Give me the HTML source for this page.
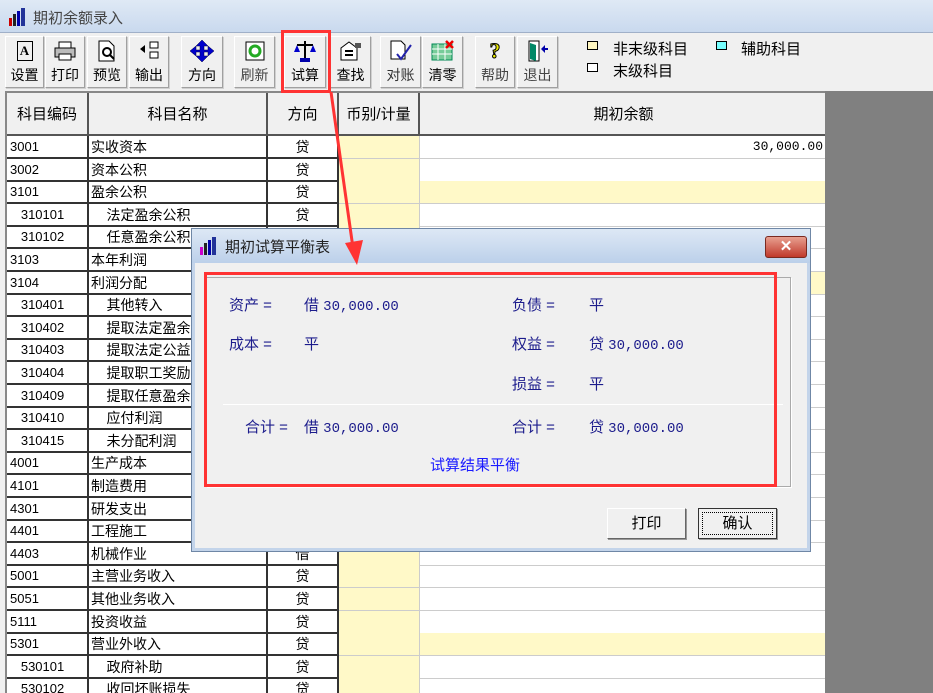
<!DOCTYPE html>
<html><head><meta charset="utf-8">
<style>
*{margin:0;padding:0;box-sizing:border-box}
body{width:933px;height:693px;overflow:hidden;background:#f0f0f0;position:relative;font-family:"Liberation Sans","Noto Sans CJK SC",sans-serif;font-size:14px;color:#000}
.abs{position:absolute}
.title{left:0;top:0;width:933px;height:33px;background:linear-gradient(#dfe9f5,#c9d9ee);border-bottom:1px solid #a0b0c8}
.title span{position:absolute;left:33px;top:7px;font-size:15px;color:#444}
.btn{position:absolute;top:36px;height:52px;background:#f0f0f0;border:1px solid;border-color:#fff #a0a0a0 #a0a0a0 #fff;box-shadow:1px 1px 0 #d0d0d0;text-align:center;font-size:14px}
.btn .ic{height:28px;display:flex;align-items:center;justify-content:center}
.btn .tx{line-height:20px}
.grid{left:5px;top:91px;width:820px;height:602px;background:#fff;border-left:2px solid #888;border-top:2px solid #888;overflow:hidden}
.dark{left:825px;top:91px;width:108px;height:602px;background:#808080}
.hd{position:absolute;top:0;height:43px;background:#f0f0f0;border-right:2px solid #555;border-bottom:2px solid #555;display:flex;align-items:center;justify-content:center;font-size:15px}
.row{position:absolute;left:0;height:23px;width:820px}
.c{position:absolute;top:0;height:23px;line-height:22px;font-size:14px;white-space:nowrap;overflow:hidden}
.c1{left:0;width:82px;border-right:2px solid #333;border-bottom:2px solid #333;font-size:13px;padding-left:3px}
.c2{left:82px;width:179px;border-right:2px solid #333;border-bottom:2px solid #333;padding-left:2px}
.c3{left:261px;width:71px;border-right:2px solid #333;border-bottom:2px solid #333;text-align:center}
.c4{left:332px;width:81px;background:#fff9c8;border-right:1px solid #ccc;border-bottom:1px solid #ccc}
.c5{left:413px;width:407px;border-bottom:1px solid #ccc;text-align:right;padding-right:4px;font-family:"Liberation Mono","Noto Sans CJK SC",monospace;font-size:13px}
.y{background:#fff9c8}
.dlg{left:191px;top:228px;width:620px;height:324px;background:#f0f0f0;border:1px solid #6f87a6;box-shadow:0 0 0 3px #c3d4ea inset}
.dt{position:absolute;left:0;top:0;width:618px;height:34px;background:linear-gradient(#dde8f5,#bcd0ea)}
.blue{color:#1c1c8c;font-size:15px;position:absolute}
.mono{font-family:"Liberation Mono",monospace;font-size:14px}
.pb{position:absolute;top:279px;width:79px;height:31px;background:#f0f0f0;border:1px solid;border-color:#fff #666 #666 #fff;box-shadow:1px 1px 0 #999;text-align:center;line-height:29px;font-size:15px}
</style></head><body>
<div class="abs title"><svg class="abs" style="left:8px;top:8px" width="20" height="18"><rect x="1" y="10" width="3" height="8" fill="#c00"/><rect x="5" y="6" width="3" height="12" fill="#222"/><rect x="9" y="3" width="3" height="15" fill="#00a"/><rect x="13" y="0" width="4" height="18" fill="#239"/></svg><span>期初余额录入</span></div>

<div class="btn" style="left:5px;width:39px"><div class="ic"><div style="width:16px;height:20px;border:1px solid #000;font:bold 13px 'Liberation Serif';line-height:18px">A</div></div><div class="tx">设置</div></div>
<div class="btn" style="left:45px;width:40px"><div class="ic"><svg width="22" height="20"><rect x="5" y="1" width="12" height="6" fill="#fff" stroke="#000"/><rect x="1" y="7" width="20" height="9" fill="#bbb" stroke="#000"/><rect x="5" y="13" width="12" height="6" fill="#fff" stroke="#000"/></svg></div><div class="tx">打印</div></div>
<div class="btn" style="left:87px;width:40px"><div class="ic"><svg width="20" height="22"><path d="M2 1h10l5 5v15H2z" fill="#fff" stroke="#000"/><circle cx="10" cy="12" r="4" fill="none" stroke="#000" stroke-width="2"/><path d="M13 15l4 4" stroke="#000" stroke-width="2"/></svg></div><div class="tx">预览</div></div>
<div class="btn" style="left:129px;width:40px"><div class="ic"><svg width="22" height="20"><path d="M2 8l5-4v8z" fill="#000"/><rect x="12" y="1" width="8" height="6" fill="#fff" stroke="#000"/><rect x="12" y="11" width="8" height="6" fill="#fff" stroke="#000"/></svg></div><div class="tx">输出</div></div>
<div class="btn" style="left:181px;width:42px"><div class="ic"><svg width="24" height="24"><path d="M12 1l6 6h-4v4h4V7l6 5-6 5v-4h-4v4h4l-6 6-6-6h4v-4H6v4l-6-5 6-5v4h4V7H6z" fill="#00c" stroke="#004" stroke-width=".5"/></svg></div><div class="tx">方向</div></div>
<div class="btn" style="left:234px;width:41px"><div class="ic"><svg width="20" height="20"><rect x="1" y="1" width="18" height="18" fill="#fff" stroke="#000"/><circle cx="10" cy="10" r="5" fill="none" stroke="#2a2" stroke-width="3"/></svg></div><div class="tx" style="color:#444">刷新</div></div>
<div class="btn" style="left:284px;width:42px"><div class="ic"><svg width="24" height="24"><path d="M12 2v18M4 6h16M8 21h8" stroke="#000" stroke-width="2"/><path d="M1 13l3-7 3 7zM17 13l3-7 3 7z" fill="#00c"/><rect x="7" y="19" width="10" height="4" fill="#00a"/></svg></div><div class="tx">试算</div></div>
<div class="btn" style="left:330px;width:41px"><div class="ic"><svg width="24" height="22"><path d="M2 8l8-6 8 6v12H2z" fill="#fff" stroke="#000"/><rect x="6" y="10" width="8" height="2" fill="#000"/><rect x="6" y="14" width="8" height="2" fill="#000"/><path d="M16 3h6v5h-6z" fill="#555"/></svg></div><div class="tx">查找</div></div>
<div class="btn" style="left:380px;width:41px"><div class="ic"><svg width="24" height="22"><path d="M2 1h10l4 4v14H2z" fill="#fff" stroke="#000"/><path d="M8 14l4 5 10-14" fill="none" stroke="#22a" stroke-width="2"/></svg></div><div class="tx" style="color:#333">对账</div></div>
<div class="btn" style="left:422px;width:41px"><div class="ic"><svg width="24" height="22"><rect x="1" y="4" width="20" height="16" fill="#7c9" stroke="#085"/><path d="M1 9h20M1 14h20M7 4v16M14 4v16" stroke="#fff"/><path d="M15 1l7 7M22 1l-7 7" stroke="#e00" stroke-width="2.5"/></svg></div><div class="tx">清零</div></div>
<div class="btn" style="left:475px;width:40px"><div class="ic"><span style="font:bold 22px 'Liberation Serif';color:#ee0;-webkit-text-stroke:1px #000">?</span></div><div class="tx" style="color:#444">帮助</div></div>
<div class="btn" style="left:517px;width:41px"><div class="ic"><svg width="22" height="22"><rect x="2" y="1" width="10" height="20" fill="#fff" stroke="#000"/><path d="M3 3l6 2v16l-6-2z" fill="#086"/><path d="M14 9l4-4v3h3v2h-3v3z" fill="#00a"/></svg></div><div class="tx" style="color:#444">退出</div></div>

<div class="abs" style="left:587px;top:41px;width:11px;height:9px;background:#fff6c0;border:1px solid #000"></div>
<div class="abs" style="left:613px;top:38px;font-size:15px">非末级科目</div>
<div class="abs" style="left:716px;top:41px;width:11px;height:9px;background:#7ff;border:1px solid #000"></div>
<div class="abs" style="left:741px;top:38px;font-size:15px">辅助科目</div>
<div class="abs" style="left:587px;top:63px;width:11px;height:9px;background:#fff;border:1px solid #000"></div>
<div class="abs" style="left:613px;top:60px;font-size:15px">末级科目</div>

<div class="abs dark"></div>
<div class="abs grid">
<div class="hd" style="left:0;width:82px">科目编码</div>
<div class="hd" style="left:82px;width:179px">科目名称</div>
<div class="hd" style="left:261px;width:71px">方向</div>
<div class="hd" style="left:332px;width:81px">币别/计量</div>
<div class="hd" style="left:413px;width:407px;border-right:none">期初余额</div>
<div style="position:absolute;left:0;top:43px">
<div class="row" style="top:0"><div class="c c1">3001</div><div class="c c2">实收资本</div><div class="c c3">贷</div><div class="c c4"></div><div class="c c5">30,000.00</div></div>
<div class="row" style="top:22.6px"><div class="c c1">3002</div><div class="c c2">资本公积</div><div class="c c3">贷</div><div class="c c4"></div><div class="c c5"></div></div>
<div class="row" style="top:45.2px"><div class="c c1">3101</div><div class="c c2">盈余公积</div><div class="c c3">贷</div><div class="c c4"></div><div class="c c5 y"></div></div>
<div class="row" style="top:67.8px"><div class="c c1">&nbsp;&nbsp;&nbsp;310101</div><div class="c c2">&nbsp;&nbsp;&nbsp;&nbsp;法定盈余公积</div><div class="c c3">贷</div><div class="c c4"></div><div class="c c5"></div></div>
<div class="row" style="top:90.4px"><div class="c c1">&nbsp;&nbsp;&nbsp;310102</div><div class="c c2">&nbsp;&nbsp;&nbsp;&nbsp;任意盈余公积</div><div class="c c3">贷</div><div class="c c4"></div><div class="c c5"></div></div>
<div class="row" style="top:113px"><div class="c c1">3103</div><div class="c c2">本年利润</div><div class="c c3">贷</div><div class="c c4"></div><div class="c c5"></div></div>
<div class="row" style="top:135.6px"><div class="c c1">3104</div><div class="c c2">利润分配</div><div class="c c3">贷</div><div class="c c4"></div><div class="c c5 y"></div></div>
<div class="row" style="top:158.2px"><div class="c c1">&nbsp;&nbsp;&nbsp;310401</div><div class="c c2">&nbsp;&nbsp;&nbsp;&nbsp;其他转入</div><div class="c c3">贷</div><div class="c c4"></div><div class="c c5"></div></div>
<div class="row" style="top:180.8px"><div class="c c1">&nbsp;&nbsp;&nbsp;310402</div><div class="c c2">&nbsp;&nbsp;&nbsp;&nbsp;提取法定盈余公积</div><div class="c c3">贷</div><div class="c c4"></div><div class="c c5"></div></div>
<div class="row" style="top:203.4px"><div class="c c1">&nbsp;&nbsp;&nbsp;310403</div><div class="c c2">&nbsp;&nbsp;&nbsp;&nbsp;提取法定公益金</div><div class="c c3">贷</div><div class="c c4"></div><div class="c c5"></div></div>
<div class="row" style="top:226px"><div class="c c1">&nbsp;&nbsp;&nbsp;310404</div><div class="c c2">&nbsp;&nbsp;&nbsp;&nbsp;提取职工奖励</div><div class="c c3">贷</div><div class="c c4"></div><div class="c c5"></div></div>
<div class="row" style="top:248.6px"><div class="c c1">&nbsp;&nbsp;&nbsp;310409</div><div class="c c2">&nbsp;&nbsp;&nbsp;&nbsp;提取任意盈余</div><div class="c c3">贷</div><div class="c c4"></div><div class="c c5"></div></div>
<div class="row" style="top:271.2px"><div class="c c1">&nbsp;&nbsp;&nbsp;310410</div><div class="c c2">&nbsp;&nbsp;&nbsp;&nbsp;应付利润</div><div class="c c3">贷</div><div class="c c4"></div><div class="c c5"></div></div>
<div class="row" style="top:293.8px"><div class="c c1">&nbsp;&nbsp;&nbsp;310415</div><div class="c c2">&nbsp;&nbsp;&nbsp;&nbsp;未分配利润</div><div class="c c3">贷</div><div class="c c4"></div><div class="c c5"></div></div>
<div class="row" style="top:316.4px"><div class="c c1">4001</div><div class="c c2">生产成本</div><div class="c c3">借</div><div class="c c4"></div><div class="c c5"></div></div>
<div class="row" style="top:339px"><div class="c c1">4101</div><div class="c c2">制造费用</div><div class="c c3">借</div><div class="c c4"></div><div class="c c5"></div></div>
<div class="row" style="top:361.6px"><div class="c c1">4301</div><div class="c c2">研发支出</div><div class="c c3">借</div><div class="c c4"></div><div class="c c5"></div></div>
<div class="row" style="top:384.2px"><div class="c c1">4401</div><div class="c c2">工程施工</div><div class="c c3">借</div><div class="c c4"></div><div class="c c5"></div></div>
<div class="row" style="top:406.8px"><div class="c c1">4403</div><div class="c c2">机械作业</div><div class="c c3">借</div><div class="c c4"></div><div class="c c5"></div></div>
<div class="row" style="top:429.4px"><div class="c c1">5001</div><div class="c c2">主营业务收入</div><div class="c c3">贷</div><div class="c c4"></div><div class="c c5"></div></div>
<div class="row" style="top:452px"><div class="c c1">5051</div><div class="c c2">其他业务收入</div><div class="c c3">贷</div><div class="c c4"></div><div class="c c5"></div></div>
<div class="row" style="top:474.6px"><div class="c c1">5111</div><div class="c c2">投资收益</div><div class="c c3">贷</div><div class="c c4"></div><div class="c c5"></div></div>
<div class="row" style="top:497.2px"><div class="c c1">5301</div><div class="c c2">营业外收入</div><div class="c c3">贷</div><div class="c c4"></div><div class="c c5 y"></div></div>
<div class="row" style="top:519.8px"><div class="c c1">&nbsp;&nbsp;&nbsp;530101</div><div class="c c2">&nbsp;&nbsp;&nbsp;&nbsp;政府补助</div><div class="c c3">贷</div><div class="c c4"></div><div class="c c5"></div></div>
<div class="row" style="top:542.4px"><div class="c c1">&nbsp;&nbsp;&nbsp;530102</div><div class="c c2">&nbsp;&nbsp;&nbsp;&nbsp;收回坏账损失</div><div class="c c3">贷</div><div class="c c4"></div><div class="c c5"></div></div>
</div>
</div>

<!-- red highlight on 试算 -->
<div class="abs" style="left:281px;top:30px;width:50px;height:63px;border:3px solid #f33"></div>

<div class="abs dlg">
<div class="dt"><svg class="abs" style="left:7px;top:8px" width="20" height="18"><rect x="1" y="10" width="3" height="8" fill="#c0c"/><rect x="5" y="6" width="3" height="12" fill="#222"/><rect x="9" y="3" width="3" height="15" fill="#00a"/><rect x="13" y="0" width="4" height="18" fill="#239"/></svg><span class="abs" style="left:33px;top:7px;font-size:15px;color:#222">期初试算平衡表</span>
<div class="abs" style="left:573px;top:7px;width:42px;height:22px;border-radius:3px;background:linear-gradient(#e8a090,#c0392b);border:1px solid #7a2a20;color:#fff;font:bold 15px 'Liberation Sans';text-align:center;line-height:20px">✕</div></div>
<div class="abs" style="left:14px;top:48px;width:585px;height:210px;border:1px solid #aaa;box-shadow:1px 1px 0 #fff"></div>
<div class="abs" style="left:31px;top:175px;width:560px;height:1px;background:#888;border-bottom:1px solid #fff"></div>
<div class="blue" style="left:37px;top:65px">资产 =</div>
<div class="blue" style="left:112px;top:65px">借 <span class="mono">30,000.00</span></div>
<div class="blue" style="left:320px;top:65px">负债 =</div>
<div class="blue" style="left:397px;top:65px">平</div>
<div class="blue" style="left:37px;top:104px">成本 =</div>
<div class="blue" style="left:112px;top:104px">平</div>
<div class="blue" style="left:320px;top:104px">权益 =</div>
<div class="blue" style="left:397px;top:104px">贷 <span class="mono">30,000.00</span></div>
<div class="blue" style="left:320px;top:144px">损益 =</div>
<div class="blue" style="left:397px;top:144px">平</div>
<div class="blue" style="left:53px;top:187px">合计 =</div>
<div class="blue" style="left:112px;top:187px">借 <span class="mono">30,000.00</span></div>
<div class="blue" style="left:320px;top:187px">合计 =</div>
<div class="blue" style="left:397px;top:187px">贷 <span class="mono">30,000.00</span></div>
<div class="abs" style="left:238px;top:225px;color:#1a1aff;font-size:15px">试算结果平衡</div>
<div class="abs" style="left:12px;top:43px;width:573px;height:215px;border:3px solid #f33"></div>
<div class="pb" style="left:415px">打印</div>
<div class="pb" style="left:506px;border:1px solid #333"><div style="position:absolute;left:3px;top:3px;right:3px;bottom:3px;border:1px dotted #000"></div>确认</div>
</div>

<!-- arrow -->
<svg class="abs" style="left:320px;top:88px" width="60" height="185"><path d="M11 4L33 160" stroke="#f33" stroke-width="3"/><path d="M25 155l12 22 6-25z" fill="#f33"/></svg>
</body></html>
